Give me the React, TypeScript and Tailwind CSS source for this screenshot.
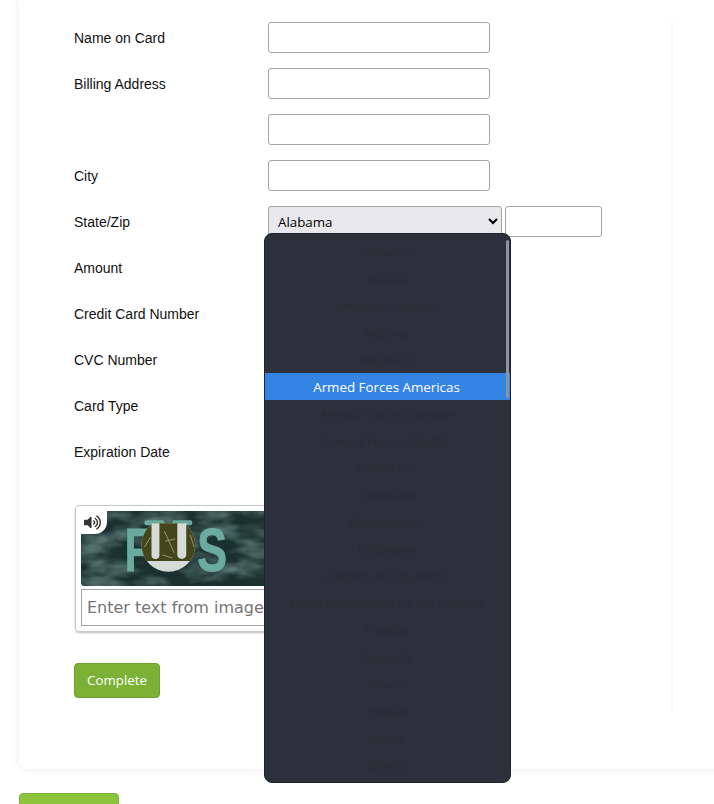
import { FaVolumeUp } from 'react-icons/fa';

const STATES = [
  'Alabama',
  'Alaska',
  'American Samoa',
  'Arizona',
  'Arkansas',
  'Armed Forces Americas',
  'Armed Forces Europe',
  'Armed Forces Pacific',
  'California',
  'Colorado',
  'Connecticut',
  'Delaware',
  'District of Columbia',
  'Federated States Of Micronesia',
  'Florida',
  'Georgia',
  'Guam',
  'Hawaii',
  'Idaho',
  'Illinois',
];

const inputCls = 'h-[31px] w-[222px] rounded-[3px] border border-[#a5a5a5] bg-white';

function Row({ label, children }: { label?: string; children: React.ReactNode }) {
  return (
    <div className="flex h-[31px] items-center">
      <label className="mt-[2px] w-[194px] font-['Liberation_Sans',sans-serif] text-[14px] text-[#111]">{label}</label>
      {children}
    </div>
  );
}

function Captcha() {
  return (
    <div className="ml-px flex h-[127px] w-[290px] flex-col rounded-[4px] border border-[#c8c8c8] p-[5px] shadow-[0_1px_2px_rgba(0,0,0,0.25)]">
      <div className="relative h-[75px] w-full overflow-hidden rounded-bl-[4px] bg-[#1f3b39]">
        <svg viewBox="0 0 280 75" className="h-full w-full">
          <defs>
            <filter id="grain" x="0" y="0" width="100%" height="100%">
              <feTurbulence type="fractalNoise" baseFrequency="0.025 0.06" numOctaves="3" seed="7" />
              <feColorMatrix values="0 0 0 0 0.24  0 0 0 0 0.40  0 0 0 0 0.38  1.5 0 0 0 -0.6" />
            </filter>
            <clipPath id="disc">
              <rect x="55" y="12" width="66" height="38" />
            </clipPath>
            <clipPath id="below">
              <rect x="55" y="12" width="66" height="60" />
            </clipPath>
          </defs>
          <rect width="280" height="75" fill="#1a3130" />
          <rect width="280" height="75" filter="url(#grain)" />
          <g fontFamily="'Liberation Sans', sans-serif" fontWeight="700" fontSize="62" fill="#6aaa9f" stroke="#6aaa9f" strokeWidth="1">
            <text x="44" y="60" textLength="26" lengthAdjust="spacingAndGlyphs">F</text>
            <text x="117" y="60" textLength="30" lengthAdjust="spacingAndGlyphs">S</text>
          </g>
          <rect x="64" y="9" width="20" height="5" rx="2" fill="#6aaa9f" />
          <rect x="92" y="9" width="20" height="5" rx="2" fill="#6aaa9f" />
          <circle cx="88" cy="34" r="27" fill="#d6dbd7" clipPath="url(#below)" />
          <circle cx="88" cy="34" r="27" fill="#45451c" clipPath="url(#disc)" />
          <path d="M71 12 H79 V44 a4 4 0 0 1 -8 0 Z M97 12 H106 V44 a4.5 4 0 0 1 -9 0 Z" fill="#d6dbd7" />
          <path d="M64 36 L70 26 M84 20 L94 42 M110 24 L114 36 M82 44 L92 47 M85 30 L95 28" stroke="#a8a888" strokeWidth="0.8" />
        </svg>
        <div className="absolute left-0 top-0 flex h-[23px] w-[26px] items-center justify-start rounded-br-[12px] bg-white pl-[3px]">
          <FaVolumeUp className="h-[17px] w-[17px] text-[#333]" />
        </div>
      </div>
      <input
        placeholder="Enter text from image"
        className="mt-[3px] h-[37px] w-full border border-[#a5a5a5] px-[5px] font-['DejaVu_Sans',sans-serif] text-[16px] placeholder:text-[#757575]"
      />
    </div>
  );
}

export default function App() {
  return (
    <div className="relative h-[804px] w-[714px] overflow-hidden bg-white font-['Open_Sans',sans-serif]">
      <div className="ml-[19px] h-[769px] w-[720px] rounded-b-[8px] pt-[23px] shadow-[0_0_8px_rgba(0,0,0,0.07)]">
        <div className="h-[689px] w-[654px] border-r-2 border-[#f6f6f6] pl-[55px]">
          <div className="-mt-px flex flex-col gap-[15px]">
            <Row label="Name on Card"><input className={inputCls} /></Row>
            <Row label="Billing Address"><input className={inputCls} /></Row>
            <Row><input className={inputCls} /></Row>
            <Row label="City"><input className={inputCls} /></Row>
            <Row label="State/Zip">
              <select className="h-[31px] w-[234px] rounded-[3px] border border-[#a5a5a5] bg-[#e9e9ed] pl-[5px] text-[13.33px] text-black">
                <option>Alabama</option>
              </select>
              <input className="ml-[3px] h-[31px] w-[97px] rounded-[3px] border border-[#a5a5a5]" />
            </Row>
            <Row label="Amount"><input className={inputCls} /></Row>
            <Row label="Credit Card Number"><input className={inputCls} /></Row>
            <Row label="CVC Number"><input className={inputCls} /></Row>
            <Row label="Card Type"><input className={inputCls} /></Row>
            <Row label="Expiration Date"><input className={inputCls} /></Row>
          </div>
          <div className="mt-[38px]">
            <Captcha />
          </div>
          <button className="mt-[31px] h-[35px] w-[86px] rounded-[4px] border border-[#6fa12e] bg-[#7cb135] text-[13.33px] text-white">
            Complete
          </button>
        </div>
      </div>
      <button className="ml-[19px] mt-[24px] h-[40px] w-[100px] rounded-[4px] border border-[#7fb53a] bg-[#8cc43c]" />

      {/* open select list, drawn over the form */}
      <div className="absolute left-[264px] top-[233px] h-[550px] w-[247px] overflow-hidden rounded-[8px] border border-[#1f232b] bg-[#2b303a] pt-[4px]">
        <ul className="text-center text-[13.33px] text-[#2a2d35]">
          {STATES.map((s) => (
            <li
              key={s}
              className={
                s === 'Armed Forces Americas'
                  ? 'flex h-[27px] items-center justify-center bg-[#3584e4] pr-[2px] pt-[2px] text-white'
                  : 'flex h-[27px] items-center justify-center pr-[2px] pt-[2px]'
              }
            >
              {s}
            </li>
          ))}
        </ul>
        <div className="absolute right-px top-[6px] h-[158px] w-[3px] rounded-full bg-[#8b93a3]" />
      </div>
    </div>
  );
}
